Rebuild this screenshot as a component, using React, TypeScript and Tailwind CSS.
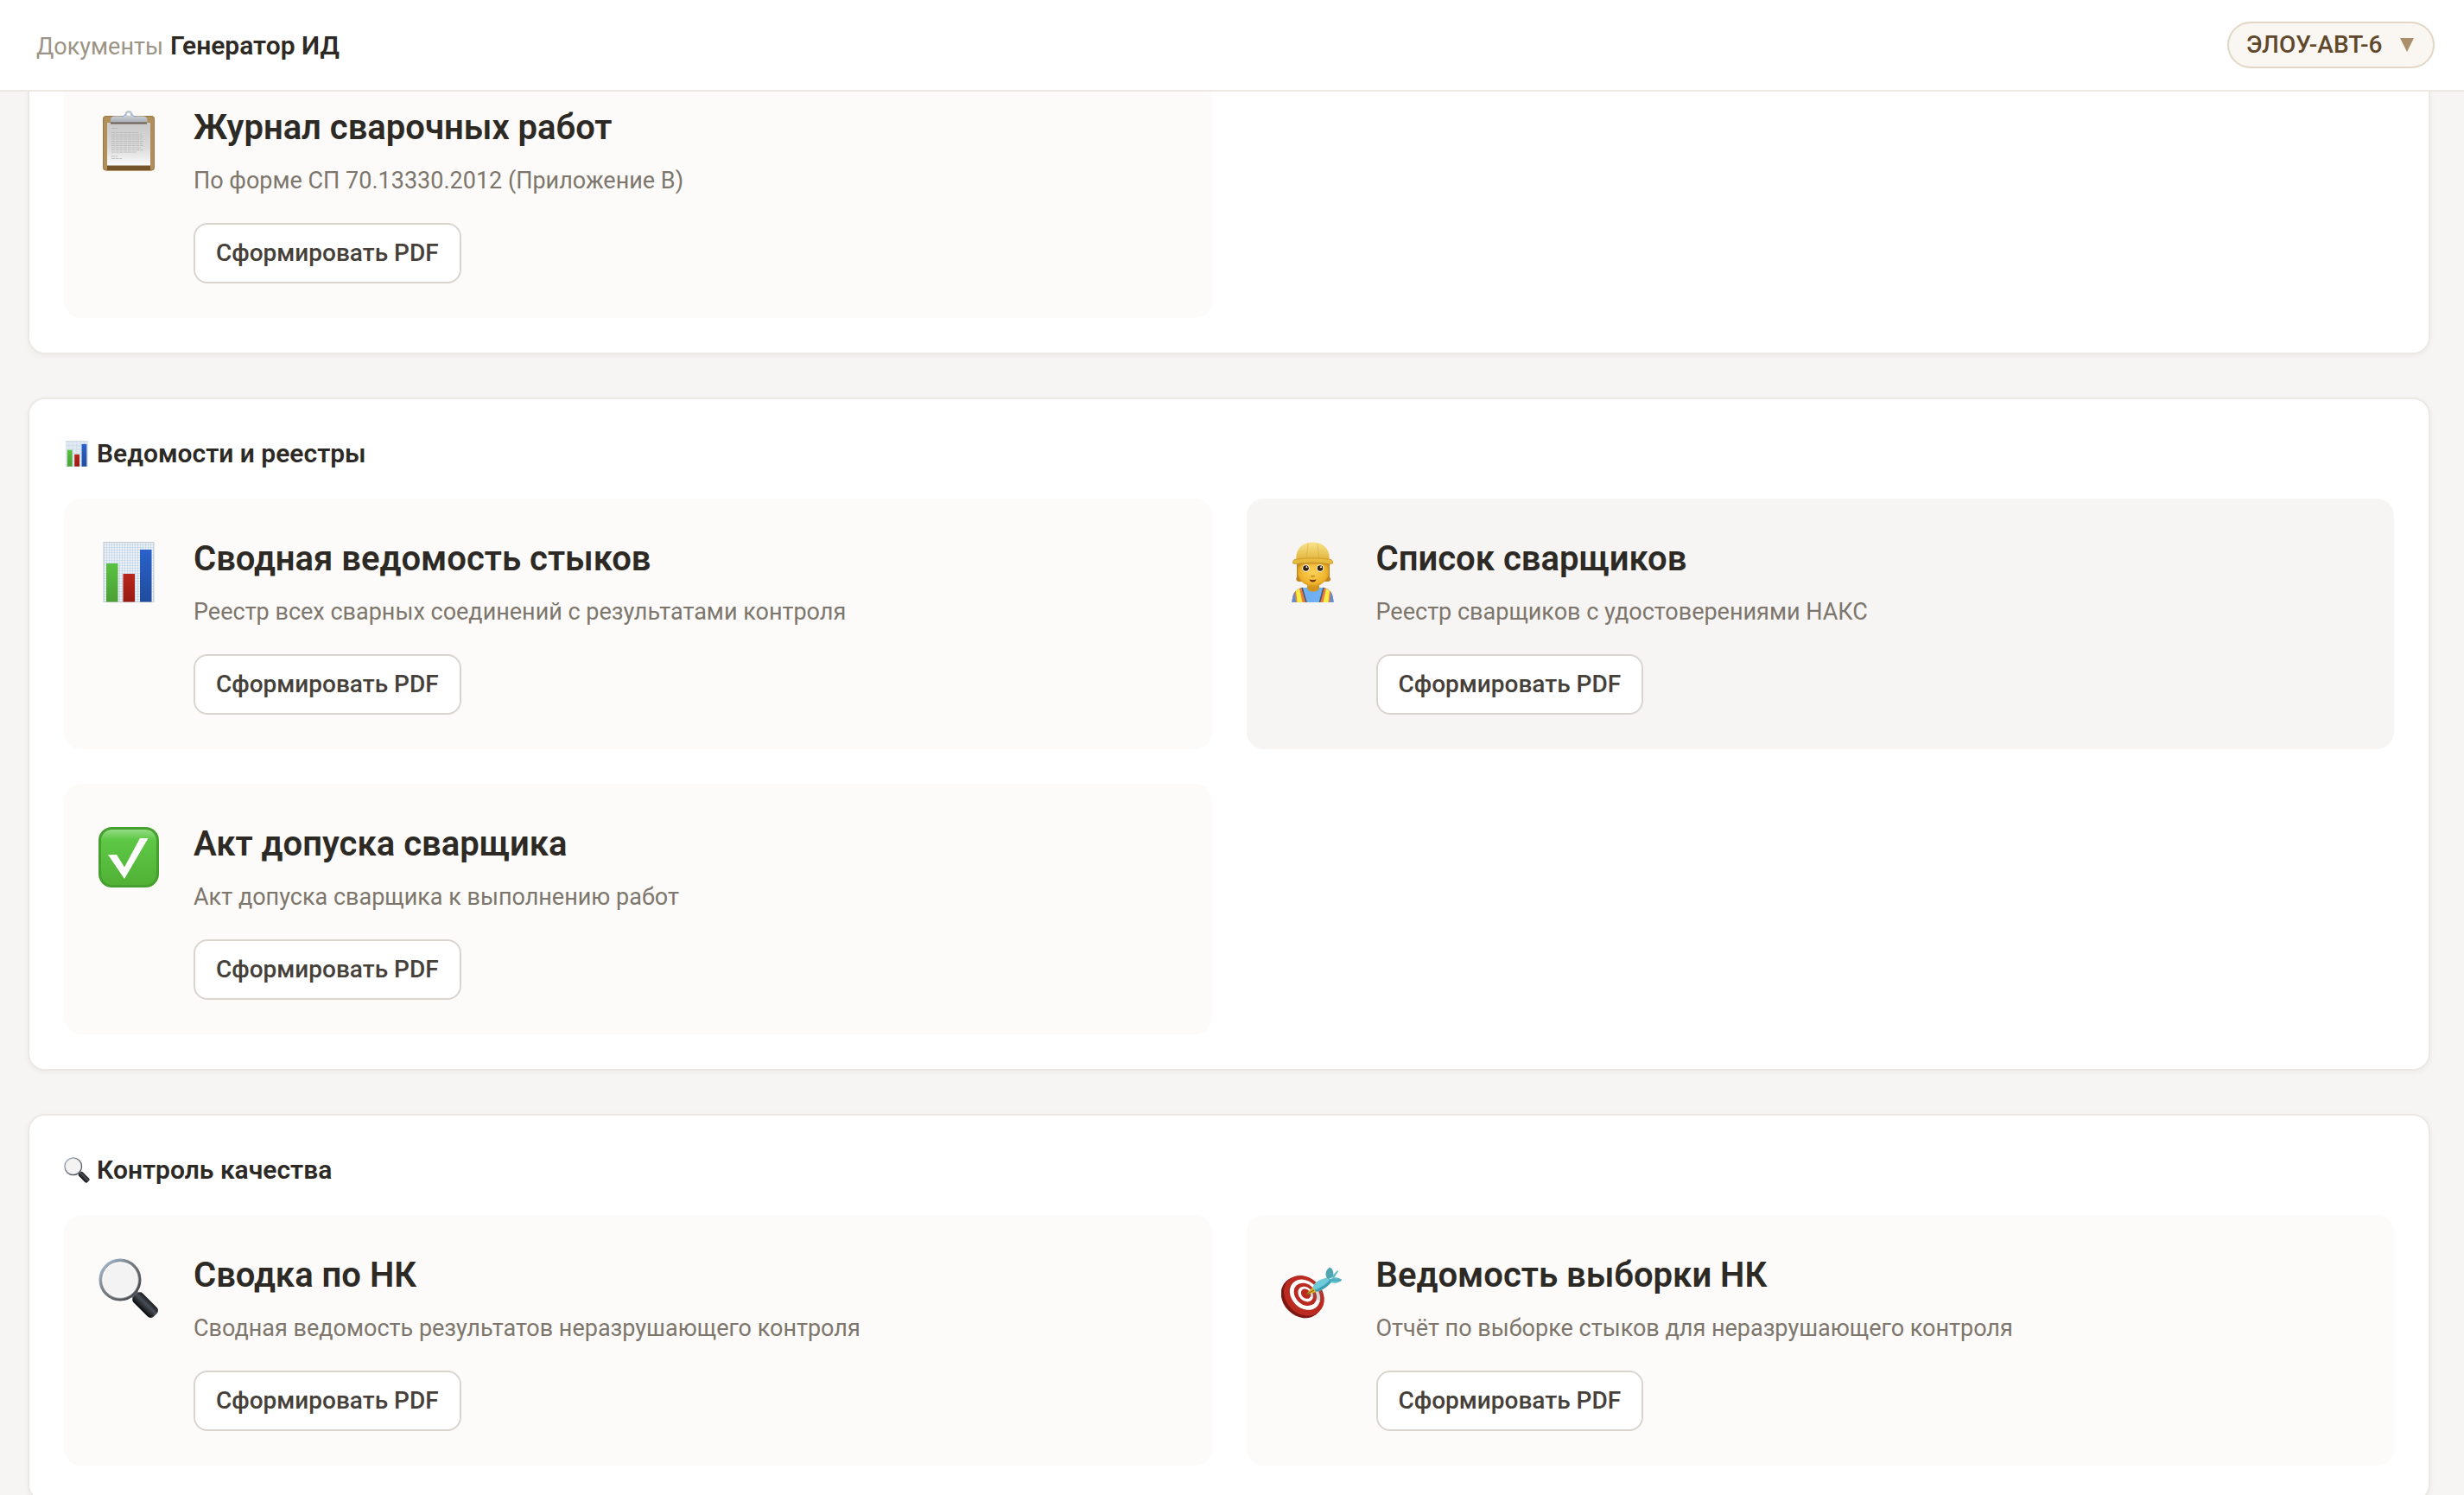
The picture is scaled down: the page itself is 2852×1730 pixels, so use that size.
import type { ReactNode } from 'react';

type IconProps = { className?: string };

const ChartIcon = ({ className }: IconProps) => (
  <svg viewBox="0 0 70 70" className={className} aria-hidden="true">
    <defs>
      <pattern id="chart-grid" width="3" height="3" patternUnits="userSpaceOnUse">
        <rect width="3" height="3" fill="#eef1f4" />
        <path d="M0 0H3M0 0V3" stroke="#b5cfe8" strokeWidth="1.2" />
      </pattern>
      <linearGradient id="chart-green" x1="0" y1="0" x2="0" y2="1">
        <stop offset="0" stopColor="#59c142" />
        <stop offset="1" stopColor="#4aa034" />
      </linearGradient>
      <linearGradient id="chart-red" x1="0" y1="0" x2="0" y2="1">
        <stop offset="0" stopColor="#b8271b" />
        <stop offset="1" stopColor="#971a12" />
      </linearGradient>
      <linearGradient id="chart-blue" x1="0" y1="0" x2="0" y2="1">
        <stop offset="0" stopColor="#2a62cb" />
        <stop offset="1" stopColor="#204c9c" />
      </linearGradient>
    </defs>
    <rect x="6" y="0.5" width="58" height="69" fill="url(#chart-grid)" stroke="#c3cad0" />
    <rect x="9" y="25" width="13.5" height="44.5" fill="url(#chart-green)" />
    <rect x="28.5" y="37" width="13.5" height="32.5" fill="url(#chart-red)" />
    <rect x="48" y="9" width="13.5" height="60.5" fill="url(#chart-blue)" />
  </svg>
);

const ClipboardIcon = ({ className }: IconProps) => (
  <svg viewBox="0 0 70 70" className={className} aria-hidden="true">
    <defs>
      <linearGradient id="clip-paper" x1="0" y1="0" x2="0" y2="1">
        <stop offset="0" stopColor="#c9c9c9" />
        <stop offset="0.6" stopColor="#dcdcdc" />
        <stop offset="1" stopColor="#fbfbfb" />
      </linearGradient>
      <linearGradient id="clip-metal" x1="0" y1="0" x2="0" y2="1">
        <stop offset="0" stopColor="#d3d8df" />
        <stop offset="1" stopColor="#a9aeb6" />
      </linearGradient>
    </defs>
    <rect x="5" y="6" width="60" height="63.5" rx="4" fill="#b08f5a" />
    <rect x="5.5" y="6.5" width="59" height="62.5" rx="3.5" fill="none" stroke="#9a7a45" />
    <rect x="10" y="62" width="50" height="7" fill="#76542a" />
    <rect x="10" y="14" width="50" height="49.5" fill="url(#clip-paper)" />
    <path
      d="M15 20.5h7M15 25.5h31M15 28h35M15 30.5h37M15 33h35M15 35.5h37M15 38h36M15 40.5h37M15 43h34M15 45.5h37M15 48h29M15 53h7M15 55.5h12"
      stroke="#b2b2b2"
      strokeWidth="0.8"
      strokeDasharray="4 0.7"
    />
    <rect x="14" y="13" width="42" height="2.5" fill="#6e5f54" />
    <circle cx="35" cy="4.5" r="3.3" fill="none" stroke="#bcc4ce" strokeWidth="2.4" />
    <path d="M14 13.5V10.5C14 8 16 6.5 19 6.5H27C30 6.5 30 4.5 32 4.5L35 6.5L38 4.5C40 4.5 40 6.5 43 6.5H51C54 6.5 56.5 8 56.5 10.5V13.5Z" fill="url(#clip-metal)" />
    <path d="M27 6.8c3 0 3-2 5-2.2M43 6.8c-3 0-3-2-5-2.2" fill="none" stroke="#7ba2d0" />
  </svg>
);

const WorkerIcon = ({ className }: IconProps) => (
  <svg viewBox="0 0 70 70" className={className} aria-hidden="true">
    <defs>
      <radialGradient id="worker-face" cx="0.5" cy="0.45" r="0.6">
        <stop offset="0" stopColor="#fbd25a" />
        <stop offset="0.7" stopColor="#f0b42d" />
        <stop offset="1" stopColor="#cc8b17" />
      </radialGradient>
      <linearGradient id="worker-hat" x1="0" y1="0" x2="0" y2="1">
        <stop offset="0" stopColor="#f8e38c" />
        <stop offset="1" stopColor="#e2b439" />
      </linearGradient>
    </defs>
    <path d="M18 22V41C16.5 43 17.5 45.500 20 46H54C57 45.5 58.5 43 56 41V22Z" fill="#bd8420" />
    <path d="M12.5 70C13 61 15.5 55 24 53H50C57.5 55 60 61 60.5 70Z" fill="#6fb0f2" />
    <path d="M30 46H44V54C42 59 32 59 30 54Z" fill="#d3941d" />
    <path d="M12.5 70C13 61 15 55.5 24 53L29 70Z" fill="#e97b45" />
    <path d="M60.5 70C60 61 58 55.5 49 53L44.5 70Z" fill="#e97b45" />
    <path d="M17 56.5L21 54L24.5 70H18.5Z" fill="#f6ee45" />
    <path d="M56 56.5L52 54L48.5 70H54.5Z" fill="#f6ee45" />
    <path d="M24 53L29 70M49 53L44.5 70" stroke="#4d5566" strokeWidth="1.5" />
    <path d="M12.5 70C12.8 65 13.5 61 15.5 58L17 70ZM60.5 70C60.2 65 59.5 61 57.5 58L56 70Z" fill="#5f8fd0" />
    <path d="M19 22H55V36C55 45 44 52 37 52C30 52 19 45 19 36Z" fill="url(#worker-face)" />
    <path d="M19 24H55V28C51 26.5 48 26 44 26H30C26 26 22 27 19 29Z" fill="#c48a20" opacity="0.5" />
    <circle cx="28.5" cy="30.5" r="4.2" fill="#fff" />
    <circle cx="45" cy="30.5" r="4.2" fill="#fff" />
    <circle cx="28.5" cy="30.5" r="3.3" fill="#3a210c" />
    <circle cx="45" cy="30.5" r="3.3" fill="#3a210c" />
    <circle cx="29.5" cy="29.3" r="1" fill="#fff" />
    <circle cx="46" cy="29.3" r="1" fill="#fff" />
    <path d="M34.5 39Q36.5 41 38.5 39" fill="none" stroke="#c58417" strokeWidth="1.5" />
    <path d="M32.5 43.5Q36.5 45 40.5 43.5Q39.5 46.5 36.5 46.5Q33.5 46.5 32.5 43.5Z" fill="#6b2c12" />
    <path d="M17.5 21C16 9 24 0.5 36.5 0.5C49 0.5 57 9 55.5 21Z" fill="url(#worker-hat)" />
    <path d="M31 2L29 21M42 2L44 21" stroke="#cfa23a" strokeWidth="1" opacity="0.45" />
    <path d="M15 20.5Q36.5 17 58 20.5Q60 22 59.5 25Q56 26 52 25Q36.5 22.5 21 25Q17 26 13.5 25Q13 22 15 20.5Z" fill="#e9bb3c" stroke="#c0902a" strokeWidth="0.7" />
  </svg>
);

const CheckIcon = ({ className }: IconProps) => (
  <svg viewBox="0 0 70 70" className={className} aria-hidden="true">
    <defs>
      <linearGradient id="check-bg" x1="0" y1="0" x2="0" y2="1">
        <stop offset="0" stopColor="#9ade8c" />
        <stop offset="0.2" stopColor="#5dc845" />
        <stop offset="1" stopColor="#50b035" />
      </linearGradient>
    </defs>
    <rect x="1.5" y="1.5" width="67" height="67" rx="14" fill="url(#check-bg)" stroke="#45a030" strokeWidth="3" />
    <path d="M11 32H21L30 46.5L48 13H57.5L30 60Z" fill="#fff" />
  </svg>
);

const MagnifierIcon = ({ className }: IconProps) => (
  <svg viewBox="0 0 70 70" className={className} aria-hidden="true">
    <defs>
      <linearGradient id="lens-ring" x1="0" y1="0" x2="1" y2="1">
        <stop offset="0" stopColor="#a9c6e8" />
        <stop offset="0.4" stopColor="#7d8289" />
        <stop offset="1" stopColor="#3b3e42" />
      </linearGradient>
      <linearGradient id="lens-handle" x1="0" y1="0" x2="0" y2="1">
        <stop offset="0" stopColor="#17191c" />
        <stop offset="0.4" stopColor="#4a4f57" />
        <stop offset="1" stopColor="#08090a" />
      </linearGradient>
    </defs>
    <path d="M38 45L45 38L50 46L46 50Z" fill="#85898e" />
    <circle cx="25" cy="25" r="23" fill="#f3f3f3" stroke="url(#lens-ring)" strokeWidth="3" />
    <circle cx="25" cy="25" r="20.5" fill="none" stroke="#fff" strokeWidth="1.5" />
    <circle cx="25" cy="25" r="21.3" fill="none" stroke="#6e7278" strokeWidth="0.7" />
    <rect x="60" y="-7.5" width="33" height="15" rx="5" transform="rotate(45)" fill="url(#lens-handle)" />
  </svg>
);

const TargetIcon = ({ className }: IconProps) => (
  <svg viewBox="0 0 70 70" className={className} aria-hidden="true">
    <g transform="rotate(45 25 44)">
      <ellipse cx="25" cy="46" rx="26" ry="21.5" fill="#7d1712" />
      <ellipse cx="25.5" cy="42.5" rx="25.5" ry="21" fill="#bb2a21" />
      <ellipse cx="25.5" cy="41" rx="19.5" ry="15.5" fill="#fff" />
      <ellipse cx="25.5" cy="40.5" rx="14.7" ry="11.5" fill="#bb2a21" />
      <ellipse cx="25.5" cy="40" rx="9.8" ry="7.8" fill="#fff" />
      <ellipse cx="25.5" cy="39.5" rx="6.3" ry="5" fill="#bb2a21" />
    </g>
    <path d="M29 42L39 39L48 37L46 50L40 47Z" fill="#7b6f6c" opacity="0.3" />
    <path d="M28.5 42L36 34L41 39Z" fill="#dfb21c" />
    <path d="M28.5 42L38 37" stroke="#7a5a10" strokeWidth="1" />
    <path d="M36.5 34C38 27 46 24 55 22L59 27C54 32 46 39 40 38.5Z" fill="#6fcad9" />
    <path d="M40 38.5C46 39 54 32 59 27L57 24.5C52 30 45 35 38.5 36.5Z" fill="#3f9fb2" />
    <path d="M54 24C50 20 51 14 56 10.5C60 12 61 17 60 22Z" fill="#4fa6b3" />
    <path d="M58 22L65 14L66 15L61 23Z" fill="#5fb6c4" />
    <path d="M57 24C62 21 67 22 70.5 25C66 29 61 30 57 27.5Z" fill="#5bbccb" />
    <path d="M55 25L69 25.5" stroke="#3f96a5" strokeWidth="0.8" />
  </svg>
);

type Doc = {
  title: string;
  description: string;
  Icon: (props: IconProps) => ReactNode;
  active?: boolean;
};

type Section = {
  id: string;
  title?: string;
  Icon?: (props: IconProps) => ReactNode;
  docs: Doc[];
};

const sections: Section[] = [
  {
    id: 'journals',
    docs: [
      { title: 'Журнал сварочных работ', description: 'По форме СП 70.13330.2012 (Приложение В)', Icon: ClipboardIcon },
    ],
  },
  {
    id: 'registers',
    title: 'Ведомости и реестры',
    Icon: ChartIcon,
    docs: [
      { title: 'Сводная ведомость стыков', description: 'Реестр всех сварных соединений с результатами контроля', Icon: ChartIcon },
      { title: 'Список сварщиков', description: 'Реестр сварщиков с удостоверениями НАКС', Icon: WorkerIcon, active: true },
      { title: 'Акт допуска сварщика', description: 'Акт допуска сварщика к выполнению работ', Icon: CheckIcon },
    ],
  },
  {
    id: 'quality',
    title: 'Контроль качества',
    Icon: MagnifierIcon,
    docs: [
      { title: 'Сводка по НК', description: 'Сводная ведомость результатов неразрушающего контроля', Icon: MagnifierIcon },
      { title: 'Ведомость выборки НК', description: 'Отчёт по выборке стыков для неразрушающего контроля', Icon: TargetIcon },
    ],
  },
];

const DocCard = ({ title, description, Icon, active }: Doc) => (
  <article className={`flex items-start gap-10 rounded-[20px] p-10 ${active ? 'bg-[#f6f5f3]' : 'bg-[#fcfbf9]'}`}>
    <Icon className="mt-2.5 size-[70px] shrink-0" />
    <div>
      <h3 className="text-[40px] leading-[60px] font-semibold text-[#2d2a26]">{title}</h3>
      <p className="mt-2.5 text-[27px] leading-[42px] text-[#7d766c]">{description}</p>
      <button
        type="button"
        className="mt-7 h-[70px] rounded-2xl border-2 border-[#d9d5ce] bg-white px-6 text-[28px] font-medium text-[#454039]"
      >
        Сформировать PDF
      </button>
    </div>
  </article>
);

const App = () => {
  return (
    <div className="flex h-screen flex-col overflow-hidden bg-[#f6f5f3] font-['Roboto',sans-serif]">

      {/* Top bar */}
      <header className="flex h-[106px] shrink-0 items-center justify-between border-b-2 border-[#ece9e4] bg-white pr-[34px] pl-[42px]">
        <nav className="flex items-baseline gap-2">
          <a href="#documents" className="text-[27px] text-[#9c9486]">Документы</a>
          <h1 className="text-[30px] font-semibold text-[#2d2a26]">Генератор ИД</h1>
        </nav>
        <div className="relative">
          <select
            aria-label="ЭЛОУ-АВТ-6"
            className="block h-[54px] appearance-none rounded-full border-2 border-[#e2d6c6] bg-[#faf6f1] pr-[58px] pl-5 text-[28px] font-medium text-[#5f482c]"
          >
            <option>ЭЛОУ-АВТ-6</option>
          </select>
          <svg viewBox="0 0 16 16" className="pointer-events-none absolute top-[19px] right-6 size-4" aria-hidden="true">
            <path d="M0 0H16L8 16Z" fill="#a98f6c" />
          </svg>
        </div>
      </header>

      {/* Document groups */}
      <main className="min-h-0 flex-1 overflow-hidden pr-[39px] pl-8">
        <div className="-mt-[70px] space-y-[50px]">
          {sections.map(({ id, title, Icon, docs }) => (
            <section key={id} className="rounded-[20px] border-2 border-[#ece9e4] bg-white p-10 shadow-[0_2px_6px_rgba(60,50,40,0.05)]">
              {title && Icon && (
                <h2 className="mb-[30px] flex items-center gap-2 text-[30px] leading-[45px] font-semibold text-[#2d2a26]">
                  <Icon className="size-[30px]" />
                  {title}
                </h2>
              )}
              <div className="grid grid-cols-2 gap-10">
                {docs.map((doc) => (
                  <DocCard key={doc.title} {...doc} />
                ))}
              </div>
            </section>
          ))}
        </div>
      </main>
    </div>
  );
};

export default App;
